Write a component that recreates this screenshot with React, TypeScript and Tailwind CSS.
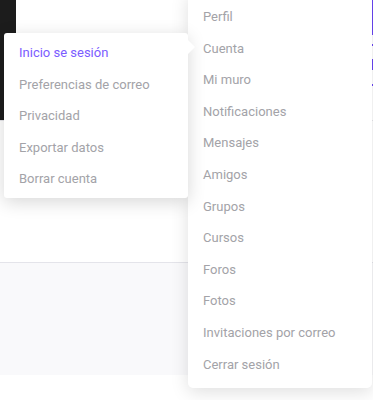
import React from 'react'

const mainItems = [
    'Perfil',
    'Cuenta',
    'Mi muro',
    'Notificaciones',
    'Mensajes',
    'Amigos',
    'Grupos',
    'Cursos',
    'Foros',
    'Fotos',
    'Invitaciones por correo',
    'Cerrar sesión',
]

const subItems = [
    'Inicio se sesión',
    'Preferencias de correo',
    'Privacidad',
    'Exportar datos',
    'Borrar cuenta',
]

export default function App() {
    return (
        <div className="relative w-[373px] h-[400px] overflow-hidden bg-white font-['Roboto',sans-serif]">
            {/* fondo de página */}
            <div className="flex flex-col">
                <div className="flex h-[121px] border-b border-[#e6e6ea]">
                    <div className="w-4 bg-[#1c1c1c]" />
                    <div className="flex-1" />
                </div>
                <div className="h-[141px]" />
                <div className="h-[113px] border-t border-[#e4e4ea] bg-[#f9f9fb]" />
            </div>

            {/* borde morado a la derecha */}
            <div className="absolute right-0 top-0 flex flex-col w-px">
                <div className="h-[35px] bg-[#6a46f5]" />
                <div className="mt-[9px] h-[2px] bg-[#6a46f5]" />
                <div className="mt-[13px] h-[11px] bg-[#6a46f5]" />
                <div className="mt-[14px] h-[2px] bg-[#6a46f5]" />
            </div>

            {/* menú principal */}
            <div className="absolute left-[188px] top-[-8px] w-[184px] rounded-[5px] bg-white pt-[9px] pb-[8px] shadow-[0_4px_18px_rgba(0,0,0,0.13)]">
                {mainItems.map((item) => (
                    <div key={item} className="px-[15px] py-[6px] text-[13px] leading-[19.6px] text-[#a3a3a8] whitespace-nowrap">
                        {item}
                    </div>
                ))}
            </div>

            {/* submenú de cuenta */}
            <div className="absolute left-[4px] top-[33px] w-[184px] rounded-[3px] bg-white pt-[4px] pb-[3px] shadow-[0_4px_18px_rgba(0,0,0,0.16)]">
                {subItems.map((item, i) => (
                    <div
                        key={item}
                        className={`px-[15px] py-[6px] text-[13px] leading-[19.6px] whitespace-nowrap ${i === 0 ? 'text-[#7b5cff]' : 'text-[#a3a3a8]'}`}
                    >
                        {item}
                    </div>
                ))}
                <div className="absolute right-[-7px] top-[7px] w-0 h-0 border-y-[7px] border-y-transparent border-l-[7px] border-l-white" />
            </div>
        </div>
    )
}
